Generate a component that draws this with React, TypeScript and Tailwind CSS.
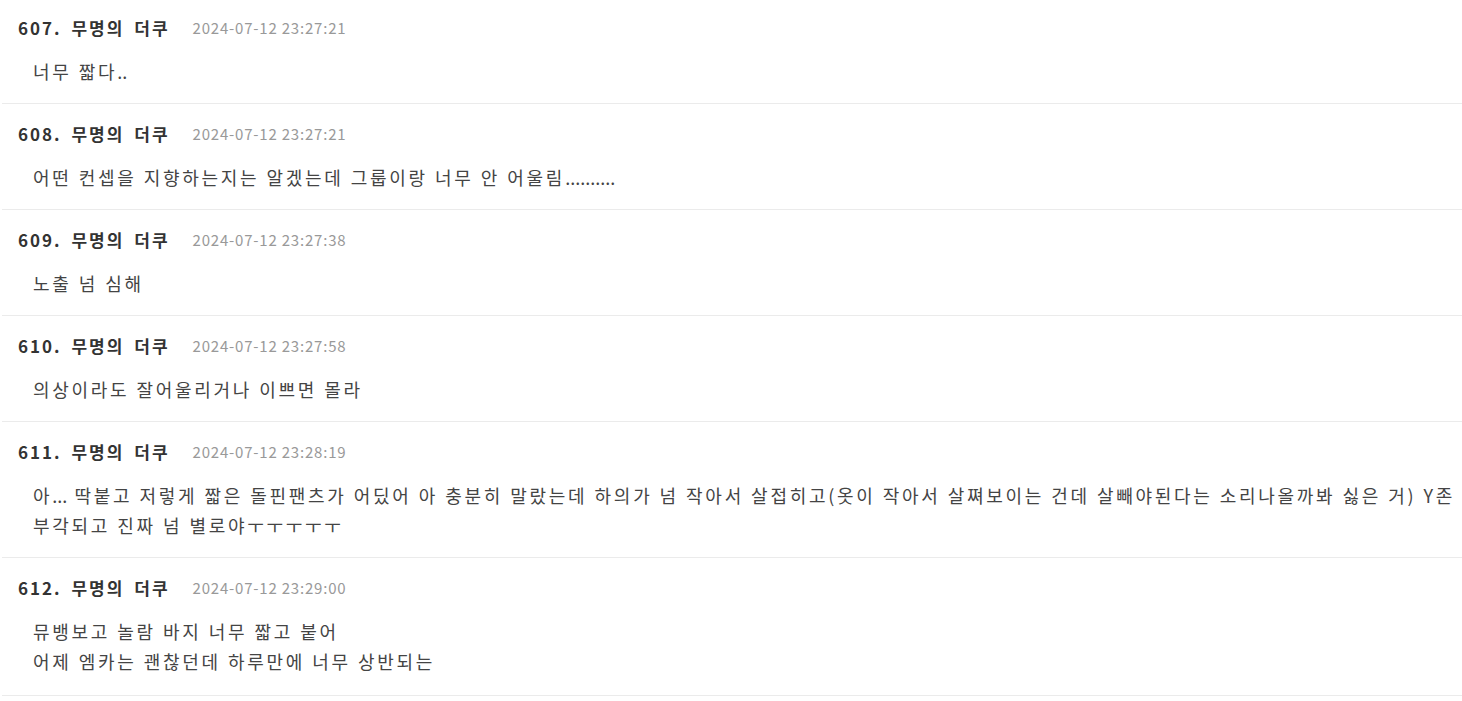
import React from "react";

type Comment = { no: number; date: string; lines: string[] };

const comments: Comment[] = [
  { no: 607, date: "2024-07-12 23:27:21", lines: ["너무 짧다.."] },
  { no: 608, date: "2024-07-12 23:27:21", lines: ["어떤 컨셉을 지향하는지는 알겠는데 그룹이랑 너무 안 어울림.........."] },
  { no: 609, date: "2024-07-12 23:27:38", lines: ["노출 넘 심해"] },
  { no: 610, date: "2024-07-12 23:27:58", lines: ["의상이라도 잘어울리거나 이쁘면 몰라"] },
  {
    no: 611,
    date: "2024-07-12 23:28:19",
    lines: [
      "아... 딱붙고 저렇게 짧은 돌핀팬츠가 어딨어 아 충분히 말랐는데 하의가 넘 작아서 살접히고(옷이 작아서 살쪄보이는 건데 살빼야된다는 소리나올까봐 싫은 거) Y존",
      "부각되고 진짜 넘 별로야ㅜㅜㅜㅜㅜ",
    ],
  },
  {
    no: 612,
    date: "2024-07-12 23:29:00",
    lines: ["뮤뱅보고 놀람 바지 너무 짧고 붙어", "어제 엠카는 괜찮던데 하루만에 너무 상반되는"],
  },
];

function Line({ text }: { text: string }) {
  const parts = text.split(/(\.{2,})/);
  return (
    <div className="whitespace-nowrap">
      {parts.map((p, k) =>
        /^\.{2,}$/.test(p) ? (
          <span key={k} className="tracking-[0px]">
            {p}
          </span>
        ) : (
          <React.Fragment key={k}>{p}</React.Fragment>
        )
      )}
    </div>
  );
}

export default function App() {
  return (
    <div
      className="w-[1462px] h-[701px] overflow-hidden bg-white"
      style={{ fontFamily: '"Noto Sans CJK KR", "Noto Sans", sans-serif' }}
    >
      <ul className="ml-[2px]">
        {comments.map((c, i) => (
          <li
            key={c.no}
            className={`border-b border-[#ebebeb] pl-[16px] ${i === 0 ? "pt-[16px]" : "pt-[18px]"} ${
              i === comments.length - 1 ? "pb-[19px]" : "pb-[17px]"
            }`}
          >
            <div className="flex items-center h-[24px]">
              <span className="text-[17px] font-bold text-[#333] tracking-[2px] [word-spacing:4px]">
                {c.no}. 무명의 더쿠
              </span>
              <span className="ml-[23px] text-[15px] text-[#999] tracking-[0.8px]">{c.date}</span>
            </div>
            <div className="mt-[16px] pl-[15px] text-[18px] leading-[30px] text-[#444] tracking-[2.7px] [word-spacing:0.5px]">
              {c.lines.map((l, j) => (
                <Line key={j} text={l} />
              ))}
            </div>
          </li>
        ))}
      </ul>
    </div>
  );
}
